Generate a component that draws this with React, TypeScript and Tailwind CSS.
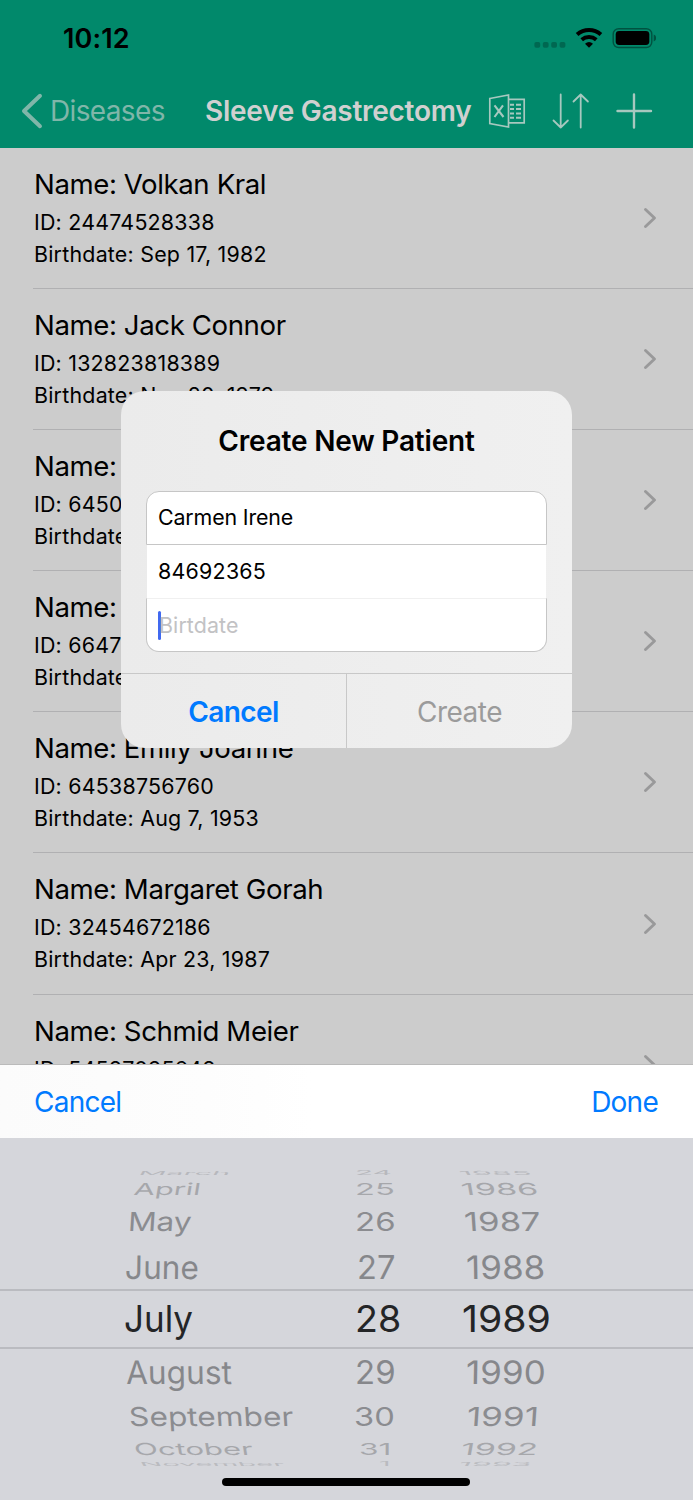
import React from 'react';

type Patient = { name: string; id: string; birthdate?: string };

const patients: Patient[] = [
    { name: 'Volkan Kral', id: '24474528338', birthdate: 'Sep 17, 1982' },
    { name: 'Jack Connor', id: '132823818389', birthdate: 'Nov 20, 1979' },
    { name: '', id: '6450', birthdate: '' },
    { name: '', id: '6647', birthdate: '' },
    { name: 'Emily Joanne', id: '64538756760', birthdate: 'Aug 7, 1953' },
    { name: 'Margaret Gorah', id: '32454672186', birthdate: 'Apr 23, 1987' },
    { name: 'Schmid Meier', id: '54587095648' },
];

// Each wheel cell is [text, left edge, horizontal scale]
type Cell = [string, number, number];
type WheelRow = { height: number; scaleY: number; skew: number; opacity: number; cells: [Cell, Cell, Cell] };

const wheelRows: WheelRow[] = [
    { height: 12, scaleY: 0.17, skew: -6, opacity: 0.16, cells: [['March', 139, 0.93], ['24', 355, 0.9], ['1985', 459, 0.97]] },
    { height: 20, scaleY: 0.5, skew: -5, opacity: 0.26, cells: [['April', 134, 0.93], ['25', 355, 0.99], ['1986', 461, 1.03]] },
    { height: 45, scaleY: 0.79, skew: -3, opacity: 0.41, cells: [['May', 128, 0.96], ['26', 355, 1], ['1987', 464, 1.05]] },
    { height: 45, scaleY: 0.98, skew: -1, opacity: 0.44, cells: [['June', 125, 0.96], ['27', 357, 0.99], ['1988', 466, 1.06]] },
    { height: 60, scaleY: 1.12, skew: 0, opacity: 1, cells: [['July', 124, 1.06], ['28', 355, 1.14], ['1989', 462, 1.19]] },
    { height: 46, scaleY: 0.98, skew: 1, opacity: 0.44, cells: [['August', 126, 0.96], ['29', 355, 1], ['1990', 466, 1.06]] },
    { height: 43, scaleY: 0.79, skew: 3, opacity: 0.41, cells: [['September', 129, 0.96], ['30', 354, 0.99], ['1991', 467, 1.06]] },
    { height: 22, scaleY: 0.5, skew: 5, opacity: 0.26, cells: [['October', 134, 0.94], ['31', 359, 0.96], ['1992', 461, 1.03]] },
    { height: 8, scaleY: 0.17, skew: 6, opacity: 0.15, cells: [['November', 140, 0.89], ['1', 379, 0.86], ['1993', 459, 0.97]] },
];

const columnStarts = [0, 340, 440];

const StatusIcons = () => (
    <svg className="h-6 w-[124px]" viewBox="0 0 124 24" fill="none">
        <g fill="#000" fillOpacity=".24">
            <rect x="2.4" y="16" width="5.8" height="5.8" rx="1.7" />
            <rect x="10.8" y="16" width="5.8" height="5.8" rx="1.7" />
            <rect x="19.2" y="16" width="5.8" height="5.8" rx="1.7" />
            <rect x="27.6" y="16" width="5.8" height="5.8" rx="1.7" />
        </g>
        <g stroke="#000" strokeWidth="4">
            <path d="M45.1 8.6a18 18 0 0 1 23.8 0" />
            <path d="M49.7 13.7a11.3 11.3 0 0 1 14.6 0" />
        </g>
        <path d="M53 17.7a6.1 6.1 0 0 1 8 0l-4 4.1z" fill="#000" />
        <rect x="81.2" y="2.7" width="38.6" height="18.8" rx="5.5" stroke="#000" strokeOpacity=".4" strokeWidth="1.4" />
        <rect x="83.7" y="5" width="33.6" height="14" rx="3.4" fill="#000" />
        <path d="M121.7 8.6c3.4 1.2 3.4 5.6 0 6.8z" fill="#000" fillOpacity=".4" />
    </svg>
);

const ExcelIcon = () => (
    <svg className="h-[36px] w-[38px]" viewBox="0 0 38 36" fill="none" stroke="#a7c8bf" strokeWidth="1.7">
        <path d="M1.8 5.5 20.5 2v32L1.8 30.5z" />
        <path d="M6.5 12.3 15.5 24M15 12.3 6.5 24" strokeWidth="2.1" />
        <path d="M20.5 6.3h15.7v23.5H20.5" />
        <path d="M22 11.7h4M28 11.7h5M22 16h4M28 16h5M22 20.4h4M28 20.4h5M22 24.8h4M28 24.8h5" strokeWidth="2" />
    </svg>
);

const SortIcon = () => (
    <svg className="h-[36px] w-[38px]" viewBox="0 0 38 36" fill="none" stroke="#a7c8bf" strokeWidth="1.8" strokeLinejoin="round" strokeLinecap="round">
        <path d="M8.7 1.5v33M1.5 27.5l7.2 7 7.2-7" />
        <path d="M28.7 34.5v-33M21.5 8.5l7.2-7 7.2 7" />
    </svg>
);

const Header = () => (
    <header className="h-[148px] bg-[#01896b]">
        <div className="flex h-[76px] items-center justify-between pl-[62px] pr-[37px]">
            <span className="pl-px pt-[2px] text-[27px] font-semibold tracking-[0.1px]">10:12</span>
            <StatusIcons />
        </div>
        <div className="flex h-[70px] items-center pl-[20px] text-[28px]">
            <svg className="h-[38px] w-[24px]" viewBox="0 0 24 38" fill="none" stroke="#80b6a9" strokeWidth="4" strokeLinecap="round" strokeLinejoin="round">
                <path d="M20 3.8 4 19l16 15.2" />
            </svg>
            <span className="ml-[6px] w-[154px] whitespace-nowrap tracking-[-0.65px] text-[#80b6a9]">Diseases</span>
            <h1 className="w-[284px] whitespace-nowrap pl-px font-semibold tracking-[-0.27px] text-[#d0d0d0]">Sleeve Gastrectomy</h1>
            <ExcelIcon />
            <span className="ml-[26px]"><SortIcon /></span>
            <svg className="ml-[25px] h-[36px] w-[38px]" viewBox="0 0 38 36" stroke="#a7c8bf" strokeWidth="2.4" strokeLinecap="round">
                <path d="M19 1.5v33M2.5 18h33.5" />
            </svg>
        </div>
    </header>
);

const PatientRow = ({ patient }: { patient: Patient }) => (
    <li className="flex h-[141.1px] items-center pl-[33px]">
        <div className="flex h-full flex-1 items-center justify-between border-b border-[#b0b0b2] pr-[35px]">
            <div className="h-full whitespace-nowrap pl-px pt-[18px] text-[21.4px] tracking-[0.22px]">
                <p className="text-[27.6px] leading-9 tracking-[-0.4px]">Name: {patient.name}</p>
                <p className="leading-10">ID: {patient.id}</p>
                {patient.birthdate !== undefined && <p className="leading-6">Birthdate: {patient.birthdate}</p>}
            </div>
            <svg className="h-[24px] w-[16px]" viewBox="0 0 16 24" fill="none" stroke="#99999a" strokeWidth="2.9" strokeLinecap="round" strokeLinejoin="round">
                <path d="M3.5 3.5 12.5 12l-9 8.5" />
            </svg>
        </div>
    </li>
);

const CreatePatientAlert = () => (
    <div className="absolute left-[121px] top-[391px] h-[357px] w-[451px] overflow-hidden rounded-[24px] bg-linear-to-r from-[#ebebeb] to-[#f0f0f0]">
        <h2 className="pt-[30px] text-center text-[28px] font-semibold leading-10 tracking-[-0.2px]">Create New Patient</h2>
        <div className="mx-[25px] mt-[30px] h-[162px] text-[21.4px]">
            <div className="flex h-[54px] items-center rounded-t-[13px] border border-[#c6c6c6] bg-white pb-px pl-[11px] tracking-[-0.15px]">Carmen Irene</div>
            <div className="mx-px flex h-[53px] items-center bg-white pl-[11px] tracking-[0.25px]">84692365</div>
            <div className="flex h-[54px] items-center rounded-b-[13px] border border-[#c6c6c6] border-t-[#f0f0f0] bg-white pl-[11px] text-[#c2c2c4]">
                <span className="h-[29px] w-[3px] rounded-full bg-[#4169f0]" />
                <span className="-ml-[2px] tracking-[0.1px]">Birtdate</span>
            </div>
        </div>
        <div className="mt-[20px] flex h-[75px] border-t border-[#c8c8c8] text-[28px]">
            <button className="flex-1 border-r border-[#c8c8c8] pt-px font-semibold tracking-[-0.6px] text-[#007aff]">Cancel</button>
            <button className="flex-1 pt-px tracking-[-0.5px] text-[#9b9b9b]">Create</button>
        </div>
    </div>
);

const DateWheel = () => (
    <div className="h-[362px] overflow-hidden bg-[#d5d6db] pt-[29px]">
        {wheelRows.map((row, i) => (
            <div
                key={i}
                className={
                    i === 4
                        ? 'grid grid-cols-[340px_100px_253px] border-y-2 border-[#babbc0]'
                        : 'grid grid-cols-[340px_100px_253px]'
                }
                style={{ height: row.height }}
            >
                {row.cells.map(([text, x, scaleX], col) => (
                    <span
                        key={col}
                        className="h-10 w-max origin-left self-start whitespace-nowrap text-[33px] leading-10 text-[#242527]"
                        style={{
                            marginLeft: x - columnStarts[col],
                            marginTop: (row.height - 40) / 2 - (i === 4 ? 2 : 0),
                            opacity: row.opacity,
                            transform: `scale(${scaleX}, ${row.scaleY}) skewX(${col === 0 ? row.skew : col === 2 ? -row.skew : 0}deg)`,
                        }}
                    >
                        {text}
                    </span>
                ))}
            </div>
        ))}
    </div>
);

const DatePicker = () => (
    <div className="absolute bottom-0 left-0 w-full">
        <div className="flex h-[74px] items-center justify-between border-t border-[#bababa] bg-linear-to-r from-[#fbfbfb] via-[#fdfdfd] via-30% to-white to-45% pl-[34px] pr-[35px] pt-px text-[28px] tracking-[-0.75px] text-[#007aff]">
            <button>Cancel</button>
            <button>Done</button>
        </div>
        <DateWheel />
        <div className="absolute bottom-[14px] left-[222px] h-[8px] w-[248px] rounded-full bg-black" />
    </div>
);

const App = () => (
    <main className="relative h-[1500px] w-[693px] overflow-hidden bg-[#cccccc] font-['Inter',sans-serif] text-black">
        <Header />
        <ul>
            {patients.map((patient, i) => (
                <PatientRow key={i} patient={patient} />
            ))}
        </ul>
        <CreatePatientAlert />
        <DatePicker />
    </main>
);

export default App;
